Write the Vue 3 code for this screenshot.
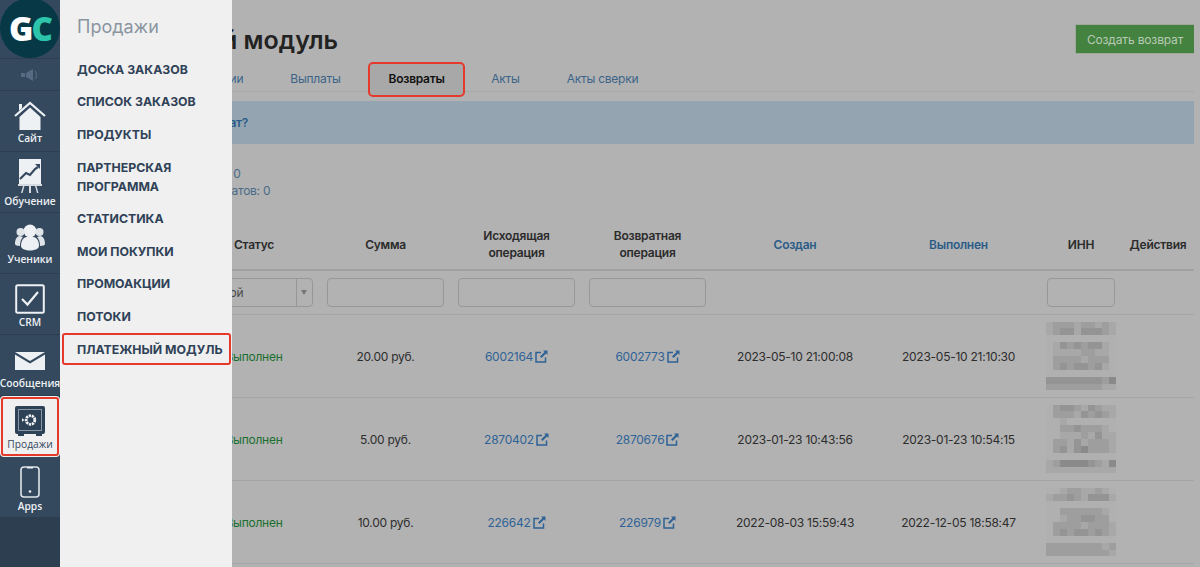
<script setup>
const mosaics = [
  ['abbbabbaba','abccacccba','..........','.acbcbcca.','.aaaabbaa.','.bbbbabbb.','.bcbccbca.','..........','ccccccccbd','bbbbbbbbaa'],
  ['.bccbacbaa','.bbbacbcba','..a.......','..bbcbbba.','..aaabacaa','.bbacabbba','.bcacdbbba','..........','abddddcbad','aaaaaaaaaa'],
  ['..abbaaba.','abbcbaccca','..........','..bbbbbba.','..abbccbb.','.bbbbabbba','.bcbccbcba','..........','bbbbbbbbab','bbbbbbbbba'],
]
const rows = [
  { id: '5501', sum: '20.00 руб.', out: '6002164', ret: '6002773', created: '2023-05-10 21:00:08', done: '2023-05-10 21:10:30', m: mosaics[0] },
  { id: '3127', sum: '5.00 руб.', out: '2870402', ret: '2870676', created: '2023-01-23 10:43:56', done: '2023-01-23 10:54:15', m: mosaics[1] },
  { id: '1094', sum: '10.00 руб.', out: '226642', ret: '226979', created: '2022-08-03 15:59:43', done: '2022-12-05 18:58:47', m: mosaics[2] },
]
const menu = ['Доска заказов', 'Список заказов', 'Продукты', 'Партнерская программа', 'Статистика', 'Мои покупки', 'Промоакции', 'Потоки']
</script>

<template>
  <div class="page">
    <aside class="rail">
      <div class="logo"><span class="logo-circle"><span class="g">G</span><span class="c">C</span></span></div>
      <div class="speaker">
        <svg width="20" height="14" viewBox="0 0 20 14"><path d="M1 5h4v4H1zM6 5l7-4v12L6 9z" fill="#566b81"/><path d="M15 3c2 2 2 6 0 8" stroke="#4b6077" stroke-width="1.6" fill="none"/></svg>
      </div>
      <div class="item">
        <svg class="ic home" width="32" height="29" viewBox="0 0 32 29"><path d="M1 15 16 2l15 13" fill="none" stroke="#eef1f3" stroke-width="2.2"/><path d="M5 3h3v4l-3 3z" fill="#eef1f3"/><path d="M5.500 16 16 6.500 26.500 16v13h-21z" fill="#eef1f3"/></svg>
        <span>Сайт</span>
      </div>
      <div class="item">
        <svg class="ic board" width="26" height="34" viewBox="0 0 26 34"><path d="M2 0h22v25H2z" fill="#eef1f3"/><path d="M3 20l6-6 4 2 5-6 3-2" fill="none" stroke="#34485e" stroke-width="2.2"/><path d="M18 5h5v5z" fill="#34485e"/><path d="M1 25h24v2H1zM6 27l-2 7h1.500l2-7zM12 27h2v7h-2zM18 27l2 7h1.500l-2-7z" fill="#d5dbe0"/></svg>
        <span>Обучение</span>
      </div>
      <div class="item">
        <svg class="ic users" width="32" height="27" viewBox="0 0 32 27"><circle cx="16" cy="7" r="6.500" fill="#eef1f3"/><circle cx="6.500" cy="8" r="4" fill="#dfe4e8"/><circle cx="25.500" cy="8" r="4" fill="#dfe4e8"/><path d="M1 20c0-5 2-8 5-8l3 1c-2 2-3 5-3 9-3 0-5-1-5-2zM31 20c0-5-2-8-5-8l-3 1c2 2 3 5 3 9 3 0 5-1 5-2z" fill="#dfe4e8"/><path d="M7 22c0-6 3-9 6-9h6c3 0 6 3 6 9 0 3-5 4.500-9 4.500S7 25 7 22z" fill="#eef1f3"/></svg>
        <span>Ученики</span>
      </div>
      <div class="item">
        <svg class="ic crm" width="30" height="30" viewBox="0 0 30 30"><rect x="1.200" y="1.200" width="27.600" height="27.600" rx="1.500" fill="none" stroke="#eef1f3" stroke-width="2"/><path d="M7 15l5.500 5.500L23 8" fill="none" stroke="#eef1f3" stroke-width="2.200"/></svg>
        <span>CRM</span>
      </div>
      <div class="item">
        <svg class="ic env" width="30" height="19" viewBox="0 0 30 19"><path d="M0 1h30L15 10z" fill="#eef1f3"/><path d="M0 3.500 15 12.500 30 3.500V19H0z" fill="#eef1f3"/></svg>
        <span class="msg">Сообщения</span>
      </div>
      <div class="item active">
        <svg class="ic" width="30" height="30" viewBox="0 0 30 30"><rect x="0" y="0" width="30" height="28" rx="2" fill="#2e4257"/><rect x="3.500" y="3.500" width="23" height="21" fill="none" stroke="#8a97a4" stroke-width="1"/><circle cx="15.500" cy="14" r="4.300" fill="none" stroke="#f2f4f6" stroke-width="2.800" stroke-dasharray="2.200 .8"/><path d="M7 12.200v3.600l2.500-1.800z" fill="#eef1f3"/><path d="M3 28h6v2H3zM21 28h6v2h-6z" fill="#2e4257"/></svg>
        <span>Продажи</span>
      </div>
      <div class="item">
        <svg class="ic phone" width="20" height="32" viewBox="0 0 20 32"><rect x="1" y="1" width="18" height="30" rx="3" fill="none" stroke="#dfe4e8" stroke-width="1.600"/><path d="M7 1h6v1.500H7z" fill="#eef1f3"/><circle cx="10" cy="25.500" r="1.300" fill="#eef1f3"/></svg>
        <span>Apps</span>
      </div>
    </aside>

    <main class="main">
      <header class="head">
        <h1>Платежный модуль</h1>
        <button class="create">Создать возврат</button>
      </header>
      <nav class="tabs">
        <a class="tab">Операции</a>
        <a class="tab">Выплаты</a>
        <a class="tab current">Возвраты</a>
        <a class="tab">Акты</a>
        <a class="tab">Акты сверки</a>
      </nav>
      <div class="alert"><a>Что такое возврат?</a></div>
      <div class="stats">
        <div class="count">Количество: 0</div>
        <div>Сумма возвратов: 0</div>
      </div>
      <table class="grid">
        <colgroup>
          <col class="c-id"><col class="c-st"><col class="c-op"><col class="c-op"><col class="c-op"><col class="c-cr"><col class="c-dn"><col class="c-in"><col class="c-ac">
        </colgroup>
        <thead>
          <tr>
            <th>ID</th><th>Статус</th><th>Сумма</th><th>Исходящая<br>операция</th><th>Возвратная<br>операция</th>
            <th class="sort">Создан</th><th class="sort">Выполнен</th><th>ИНН</th><th>Действия</th>
          </tr>
          <tr class="filters">
            <td></td>
            <td><div class="select"><span>Любой</span><span class="arrow"></span></div></td>
            <td><div class="field"></div></td>
            <td><div class="field"></div></td>
            <td><div class="field"></div></td>
            <td></td><td></td>
            <td><div class="field"></div></td>
            <td></td>
          </tr>
        </thead>
        <tbody>
          <tr v-for="r in rows" :key="r.out" class="row">
            <td>{{ r.id }}</td>
            <td class="ok">Выполнен</td>
            <td>{{ r.sum }}</td>
            <td>
              <a class="link">{{ r.out }}<svg width="13" height="13" viewBox="0 0 13 13"><path d="M10.500 7.500V12H1V2.500h5" fill="none" stroke="#2f6296" stroke-width="1.500"/><path d="M8 .5h4.500V5L11 3.500 6.500 8 5 6.500 9.500 2z" fill="#2f6296"/></svg></a>
            </td>
            <td>
              <a class="link">{{ r.ret }}<svg width="13" height="13" viewBox="0 0 13 13"><path d="M10.500 7.500V12H1V2.500h5" fill="none" stroke="#2f6296" stroke-width="1.500"/><path d="M8 .5h4.500V5L11 3.500 6.500 8 5 6.500 9.500 2z" fill="#2f6296"/></svg></a>
            </td>
            <td>{{ r.created }}</td>
            <td>{{ r.done }}</td>
            <td>
              <div class="mosaic">
                <template v-for="(line, i) in r.m" :key="i">
                  <i v-for="(ch, j) in line.split('')" :key="j" :class="'lv-' + ch.replace('.', 'x')"></i>
                </template>
              </div>
            </td>
            <td></td>
          </tr>
        </tbody>
      </table>
    </main>

    <section class="flyout">
      <div class="fly-title">Продажи</div>
      <a v-for="m in menu" :key="m" class="fly-item">{{ m }}</a>
      <a class="fly-item marked">Платежный модуль</a>
    </section>
  </div>
</template>

<style>
html, body { margin: 0; background: #b2b2b2; }
</style>

<style scoped>
.page {
  position: relative;
  display: flex;
  height: 567px;
  overflow: hidden;
  background: #b2b2b2;
  font-family: Inter, "Liberation Sans", sans-serif;
  font-size: 12px;
  letter-spacing: -0.25px;
  color: #2d2d2d;
}

/* rail */
.rail {
  flex: 0 0 60px;
  width: 60px;
  background: #2c3e50;
  font-family: "Open Sans", "Liberation Sans", sans-serif;
  letter-spacing: 0;
}
.logo {
  height: 58px;
  background: #34485e;
  border-bottom: 1px solid #2c3e50;
  overflow: hidden;
}
.logo-circle {
  display: flex;
  justify-content: center;
  align-items: center;
  width: 60px;
  height: 60px;
  margin-top: -2px;
  border-radius: 50%;
  background: #063846;
  font-weight: 800;
  font-size: 33px;
  letter-spacing: -2px;
}
.g { color: #fff; }
.c { color: #2cc5ab; }
.speaker {
  height: 31px;
  display: flex;
  align-items: center;
  justify-content: center;
  background: #34485e;
  border-bottom: 1px solid #2c3e50;
}
.item {
  box-sizing: border-box;
  height: 61px;
  display: flex;
  flex-direction: column;
  align-items: center;
  background: #34485e;
  border-bottom: 1px solid #2c3e50;
  color: #eef1f3;
  font-size: 10.200px;
  font-weight: 600;
  line-height: 14px;
}
.ic { display: block; flex: 0 0 auto; margin-top: 10px; }
.item span { margin-top: 1px; white-space: nowrap; }
.board { margin-top: 7px; }
.users { margin-top: 11px; }
.phone { margin-top: 9px; }
.env { margin-top: 16px; }
.item .msg { margin-top: 6px; font-size: 10.300px; }
.item.active {
  background: #f0f0f0;
  color: #34485e;
  font-weight: 400;
  outline: 2px solid #e5392c;
  outline-offset: -3px;
  border-radius: 4px;
  border-bottom: 0;
}

/* main */
.main {
  flex: 1 1 auto;
  min-width: 0;
  padding: 0 6px 0 20px;
}
.head {
  display: flex;
  justify-content: space-between;
  align-items: flex-start;
  height: 61px;
}
h1 {
  margin: 24px 0 0;
  padding-left: 12px;
  font-size: 25px;
  line-height: 33px;
  font-weight: 600;
  letter-spacing: 0;
  color: #222;
  white-space: nowrap;
}
.create {
  margin-top: 24px;
  width: 119px;
  height: 30px;
  padding: 0;
  border: 1px solid #9fa79e;
  border-right: 0;
  background: #43823f;
  color: #b9cbb6;
  font: 400 12px Inter, sans-serif;
  letter-spacing: -0.15px;
}
.tabs {
  display: flex;
  align-items: stretch;
  height: 30px;
  padding-left: 83px;
  border-bottom: 1px solid #a8a8a8;
}
.tab {
  padding: 0 23.500px;
  line-height: 36px;
  color: #3c6488;
  white-space: nowrap;
}
.tab.current {
  margin: 3px 0 -4px 6px;
  padding: 0 18.500px;
  line-height: 30px;
  color: #111;
  font-weight: 600;
  background: #a8a8a8;
  outline: 2.400px solid #e5392c;
  border-radius: 3px;
}
.tab.current + .tab { padding-left: 28px; }
.alert {
  margin-top: 9px;
  height: 43px;
  line-height: 43px;
  padding-left: 57px;
  background: #94a5b1;
  color: #2b5c88;
  font-weight: 600;
}
.stats {
  height: 83px;
  padding: 21px 0 0 76px;
  box-sizing: border-box;
  line-height: 17px;
  color: #476b88;
  white-space: nowrap;
}
.count { padding-left: 4px; }

.grid {
  table-layout: fixed;
  width: 1114px;
  border-collapse: collapse;
  text-align: center;
}
.c-id { width: 108px; }
.c-st { width: 132px; }
.c-op { width: 131px; }
.c-cr { width: 164px; }
.c-dn { width: 163px; }
.c-in { width: 82px; }
.c-ac { width: 72px; }
th {
  height: 34px;
  padding: 0 0 8px;
  font-weight: 600;
  line-height: 17px;
  color: #2b2b2b;
  border-bottom: 2px solid #a0a0a0;
  vertical-align: middle;
}
th.sort { color: #2b5c88; }
.filters td {
  height: 43px;
  padding: 0 7px;
  border-bottom: 1px solid #a5a5a5;
}
.field, .select {
  box-sizing: border-box;
  height: 29px;
  border: 1px solid #979797;
  border-radius: 4px;
}
.select {
  display: flex;
  align-items: center;
  justify-content: space-between;
  padding-left: 8px;
  color: #4a4a4a;
}
.arrow {
  position: relative;
  width: 15px;
  height: 27px;
  border-left: 1px solid #979797;
}
.arrow::after {
  content: "";
  position: absolute;
  left: 4px;
  top: 11px;
  border: 3.500px solid transparent;
  border-top: 5px solid #777;
}
.row td {
  height: 82px;
  padding: 0;
  border-bottom: 1px solid #a5a5a5;
}
.ok { color: #1b6f2e; }
.link {
  display: inline-flex;
  align-items: center;
  gap: 2px;
  color: #2f6296;
}
.mosaic {
  display: grid;
  grid-template-columns: repeat(10, 7px);
  grid-auto-rows: 6.900px;
  justify-content: center;
}
.lv-x { background: #b0b0b0; }
.lv-a { background: #a8a8a8; }
.lv-b { background: #9e9e9e; }
.lv-c { background: #949494; }
.lv-d { background: #8a8a8a; }

/* flyout */
.flyout {
  position: absolute;
  left: 60px;
  top: 0;
  bottom: 0;
  width: 172px;
  box-sizing: border-box;
  background: #f0f0f0;
  color: #2f4257;
  letter-spacing: 0;
}
.fly-title {
  height: 53px;
  padding: 14px 0 0 17px;
  box-sizing: border-box;
  font-size: 18px;
  line-height: 26px;
  color: #8a95a1;
}
.fly-item {
  display: block;
  margin: 0 1px 0 2px;
  padding: 6.800px 0 6.800px 15px;
  font-size: 12.300px;
  line-height: 19px;
  font-weight: 700;
  text-transform: uppercase;
}
.marked {
  outline: 2.400px solid #e5392c;
  outline-offset: -2px;
  border-radius: 3px;
  white-space: nowrap;
}
</style>
